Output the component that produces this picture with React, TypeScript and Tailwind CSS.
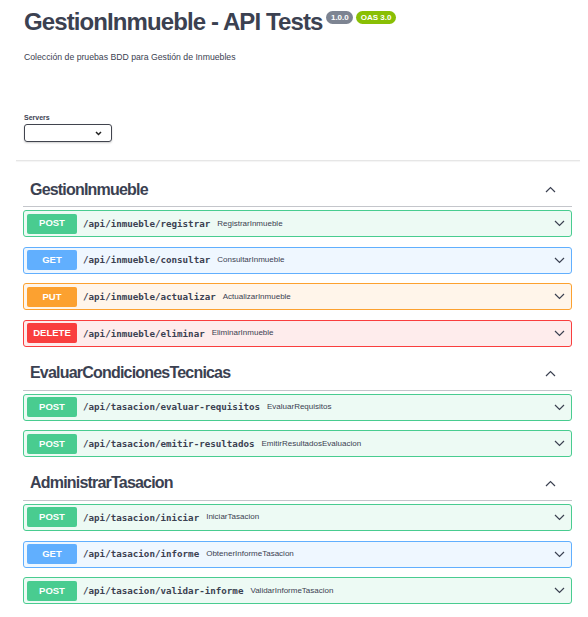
import React from "react";

type Method = "POST" | "GET" | "PUT" | "DELETE";

type Op = { method: Method; path: string; summary: string };

const methodStyles: Record<Method, { row: string; badge: string }> = {
  POST: { row: "bg-[#edfaf4] border-[#49cc90]", badge: "bg-[#49cc90]" },
  GET: { row: "bg-[#eff7ff] border-[#61affe]", badge: "bg-[#61affe]" },
  PUT: { row: "bg-[#fff5ea] border-[#fca130]", badge: "bg-[#fca130]" },
  DELETE: { row: "bg-[#feecec] border-[#f93e3e]", badge: "bg-[#f93e3e]" },
};

const sections: { name: string; ops: Op[] }[] = [
  {
    name: "GestionInmueble",
    ops: [
      { method: "POST", path: "/api/inmueble/registrar", summary: "RegistrarInmueble" },
      { method: "GET", path: "/api/inmueble/consultar", summary: "ConsultarInmueble" },
      { method: "PUT", path: "/api/inmueble/actualizar", summary: "ActualizarInmueble" },
      { method: "DELETE", path: "/api/inmueble/eliminar", summary: "EliminarInmueble" },
    ],
  },
  {
    name: "EvaluarCondicionesTecnicas",
    ops: [
      { method: "POST", path: "/api/tasacion/evaluar-requisitos", summary: "EvaluarRequisitos" },
      { method: "POST", path: "/api/tasacion/emitir-resultados", summary: "EmitirResultadosEvaluacion" },
    ],
  },
  {
    name: "AdministrarTasacion",
    ops: [
      { method: "POST", path: "/api/tasacion/iniciar", summary: "IniciarTasacion" },
      { method: "GET", path: "/api/tasacion/informe", summary: "ObtenerInformeTasacion" },
      { method: "POST", path: "/api/tasacion/validar-informe", summary: "ValidarInformeTasacion" },
    ],
  },
];

function Chevron({ up = false }: { up?: boolean }) {
  return (
    <svg width="11" height="7" viewBox="0 0 11 7" fill="none">
      <path
        d={up ? "M1 6l4.5-4.5L10 6" : "M1 1l4.5 4.5L10 1"}
        stroke="#3b4151"
        strokeWidth="1.2"
      />
    </svg>
  );
}

function OpRow({ op }: { op: Op }) {
  const s = methodStyles[op.method];
  return (
    <div
      className={`flex items-center h-[27px] mb-[9.67px] border rounded-[3px] pl-[3px] pr-[6px] ${s.row}`}
    >
      <div
        className={`w-[50px] h-[20px] rounded-[2px] flex items-center justify-center text-white text-[9.5px] font-bold ${s.badge}`}
      >
        {op.method}
      </div>
      <span className="ml-[6px] font-['DejaVu_Sans_Mono',monospace] font-bold text-[9.2px] text-[#3b4151]">
        {op.path}
      </span>
      <span className="ml-[7px] text-[8px] text-[#3b4151]">{op.summary}</span>
      <div className="ml-auto flex">
        <Chevron />
      </div>
    </div>
  );
}

export default function App() {
  return (
    <div className="w-[588px] h-[617px] overflow-hidden bg-white text-[#3b4151] font-['Liberation_Sans',Arial,sans-serif]">
      <div className="pl-[24px] pt-[10px]">
        <div className="flex items-start">
          <h1 className="text-[24px] leading-[24px] font-bold tracking-[-0.9px]">
            GestionInmueble - API Tests
          </h1>
          <span className="ml-[4px] mt-[0.5px] h-[13px] px-[4.5px] rounded-full bg-[#7d8492] text-white text-[8px] font-bold leading-[13px]">
            1.0.0
          </span>
          <span className="ml-[3px] mt-[0.5px] h-[13px] px-[4.5px] rounded-full bg-[#89bf04] text-white text-[8px] font-bold leading-[13px]">
            OAS 3.0
          </span>
        </div>
        <p className="mt-[17px] text-[8.7px] leading-[12px]">
          Colección de pruebas BDD para Gestión de Inmuebles
        </p>
        <div className="mt-[49.5px] text-[7px] font-bold leading-[9px]">Servers</div>
        <div className="mt-[2.5px] w-[88px] h-[18px] border border-[#41444e] rounded-[3px] shadow-[0_1px_2px_rgba(0,0,0,0.2)] flex items-center justify-end pr-[9px]">
          <svg width="7" height="5" viewBox="0 0 7 5" fill="none">
            <path d="M1 1l2.5 2.5L6 1" stroke="#222" strokeWidth="1.5" />
          </svg>
        </div>
      </div>

      <div className="mt-[18px] ml-[16px] w-[564px] h-px bg-[#e6e6e6] shadow-[0_1px_1px_rgba(0,0,0,0.05)]" />

      <div className="ml-[23px] w-[549px] mt-[12px]">
        {sections.map((sec) => (
          <div key={sec.name}>
            <div className="h-[34px] border-b border-[#c4c6cb] flex items-center pl-[7px] pr-[16px] mb-[3px]">
              <span className="text-[16px] font-bold tracking-[-0.8px]">{sec.name}</span>
              <div className="ml-auto flex">
                <Chevron up />
              </div>
            </div>
            {sec.ops.map((op) => (
              <OpRow key={op.path} op={op} />
            ))}
          </div>
        ))}
      </div>
    </div>
  );
}
